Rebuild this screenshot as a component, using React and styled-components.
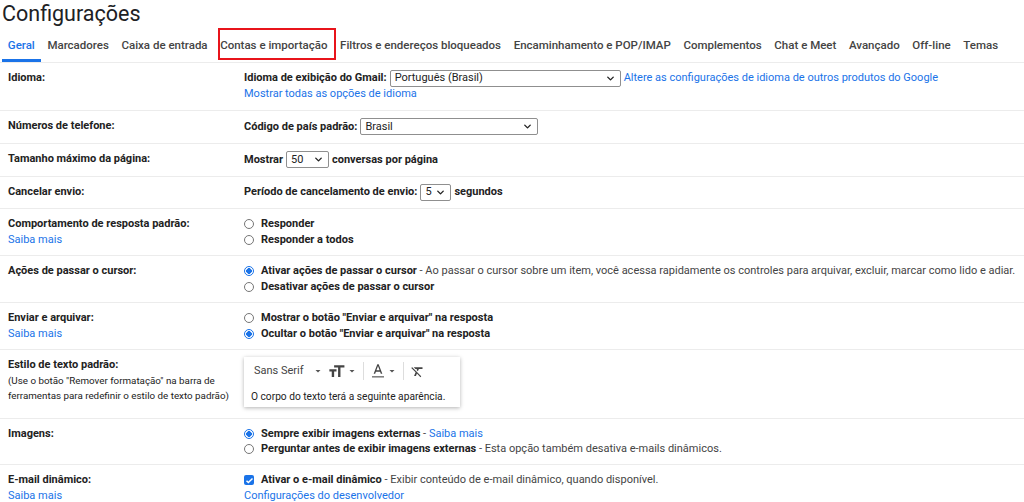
import React from "react";
import styled, { createGlobalStyle, css } from "styled-components";
import { ChevronDown } from "lucide-react";

const GlobalStyle = createGlobalStyle`
  body {
    margin: 0;
    background: #fff;
    font-family: Roboto, "Liberation Sans", Arial, sans-serif;
    color: #222;
  }
`;

const colors = {
  BLUE: "#1a73e8",
  TEXT: "#222",
  GRAY: "#444",
  LINE: "#ececec",
};

const tabs = [
  "Geral",
  "Marcadores",
  "Caixa de entrada",
  "Contas e importação",
  "Filtros e endereços bloqueados",
  "Encaminhamento e POP/IMAP",
  "Complementos",
  "Chat e Meet",
  "Avançado",
  "Off-line",
  "Temas",
];

function Radio({ checked }) {
  return <RadioCircle $checked={checked} />;
}

function Dropdown({ width, children }) {
  return (
    <SelectBox style={{ width }}>
      <span>{children}</span>
      <ChevronDown size={11} strokeWidth={3} color="#222" />
    </SelectBox>
  );
}

function Arrow() {
  return (
    <svg width="12" height="12" viewBox="0 0 24 24">
      <path d="M7 10l5 5 5-5z" fill="#555" />
    </svg>
  );
}

function TextEditor() {
  return (
    <Editor>
      <Toolbar>
        <ToolItem>
          <FontName>Sans Serif</FontName>
          <Arrow />
        </ToolItem>
        <ToolItem>
          <svg width="19" height="19" viewBox="0 0 24 24">
            <path
              d="M9 4v3h5v12h3V7h5V4H9zm-6 8h3v7h3v-7h3V9H3v3z"
              fill="#444"
            />
          </svg>
          <Arrow />
        </ToolItem>
        <ToolSep />
        <ToolItem>
          <svg width="16" height="16" viewBox="0 0 24 24">
            <path
              d="M11 2L5.5 16h2.25l1.12-3h6.25l1.12 3h2.25L13 2h-2zm-1.38 9L12 4.67 14.38 11H9.62z"
              fill="#444"
            />
            <rect x="3" y="20" width="18" height="1.6" fill="#444" />
          </svg>
          <Arrow />
        </ToolItem>
        <ToolSep />
        <ToolItem>
          <svg width="15" height="15" viewBox="0 0 24 24">
            <path
              d="M3.27 5L2 6.27l6.97 6.97L6.5 19h3l1.57-3.66L16.73 21 18 19.73 3.55 5.27 3.27 5zM6 5v.18L8.82 8h2.4l-.72 1.68 2.1 2.1L14.21 8H20V5H6z"
              fill="#444"
            />
          </svg>
        </ToolItem>
      </Toolbar>
      <EditorBody>O corpo do texto terá a seguinte aparência.</EditorBody>
    </Editor>
  );
}

export default function App() {
  return (
    <Page>
      <GlobalStyle />
      <Title>Configurações</Title>
      <TabBar>
        {tabs.map((tab, index) => (
          <Tab key={index} $active={index === 0} $marked={index === 3}>
            {tab}
          </Tab>
        ))}
      </TabBar>

      <Row>
        <Label>Idioma:</Label>
        <Value>
          <Line>
            <Strong>Idioma de exibição do Gmail:</Strong>
            <Dropdown width={231}>Português (Brasil)</Dropdown>
            <Link>Altere as configurações de idioma de outros produtos do Google</Link>
          </Line>
          <Line>
            <Link>Mostrar todas as opções de idioma</Link>
          </Line>
        </Value>
      </Row>

      <Row>
        <Label>Números de telefone:</Label>
        <Value>
          <Line $h={17}>
            <Strong>Código de país padrão:</Strong>
            <Dropdown width={178}>Brasil</Dropdown>
          </Line>
        </Value>
      </Row>

      <Row>
        <Label>Tamanho máximo da página:</Label>
        <Value>
          <Line $h={17}>
            <Strong>Mostrar</Strong>
            <Dropdown width={43}>50</Dropdown>
            <Strong>conversas por página</Strong>
          </Line>
        </Value>
      </Row>

      <Row>
        <Label>Cancelar envio:</Label>
        <Value>
          <Line>
            <Strong>Período de cancelamento de envio:</Strong>
            <Dropdown width={31}>5</Dropdown>
            <Strong>segundos</Strong>
          </Line>
        </Value>
      </Row>

      <Row $pb={7}>
        <Label>
          Comportamento de resposta padrão:
          <Link>Saiba mais</Link>
        </Label>
        <Value>
          <Option>
            <Radio />
            <Strong>Responder</Strong>
          </Option>
          <Option>
            <Radio />
            <Strong>Responder a todos</Strong>
          </Option>
        </Value>
      </Row>

      <Row $pb={7}>
        <Label>Ações de passar o cursor:</Label>
        <Value>
          <Option>
            <Radio checked />
            <Strong>Ativar ações de passar o cursor</Strong>
            <Note>
              &nbsp;- Ao passar o cursor sobre um item, você acessa rapidamente os
              controles para arquivar, excluir, marcar como lido e adiar.
            </Note>
          </Option>
          <Option>
            <Radio />
            <Strong>Desativar ações de passar o cursor</Strong>
          </Option>
        </Value>
      </Row>

      <Row $pb={7}>
        <Label>
          Enviar e arquivar:
          <Link>Saiba mais</Link>
        </Label>
        <Value>
          <Option>
            <Radio />
            <Strong>Mostrar o botão "Enviar e arquivar" na resposta</Strong>
          </Option>
          <Option>
            <Radio checked />
            <Strong>Ocultar o botão "Enviar e arquivar" na resposta</Strong>
          </Option>
        </Value>
      </Row>

      <Row $pb={7}>
        <Label>
          Estilo de texto padrão:
          <Hint>
            (Use o botão "Remover formatação" na barra de ferramentas para
            redefinir o estilo de texto padrão)
          </Hint>
        </Label>
        <Value>
          <TextEditor />
        </Value>
      </Row>

      <Row>
        <Label>Imagens:</Label>
        <Value>
          <Option $h={15}>
            <Radio checked />
            <Strong>Sempre exibir imagens externas</Strong>
            <Note>&nbsp;- </Note>
            <Link>Saiba mais</Link>
          </Option>
          <Option $h={15}>
            <Radio />
            <Strong>Perguntar antes de exibir imagens externas</Strong>
            <Note>&nbsp;- Esta opção também desativa e-mails dinâmicos.</Note>
          </Option>
        </Value>
      </Row>

      <Row $last>
        <Label>
          E-mail dinâmico:
          <Link>Saiba mais</Link>
        </Label>
        <Value>
          <Option>
            <Checkbox>
              <svg width="9" height="9" viewBox="0 0 24 24">
                <path
                  d="M4 12.5l5 5L20 6.5"
                  stroke="#fff"
                  strokeWidth="4"
                  fill="none"
                />
              </svg>
            </Checkbox>
            <Strong>Ativar o e-mail dinâmico</Strong>
            <Note>
              &nbsp;- Exibir conteúdo de e-mail dinâmico, quando disponível.
            </Note>
          </Option>
          <Line>
            <Link>Configurações do desenvolvedor</Link>
          </Line>
        </Value>
      </Row>
    </Page>
  );
}

const Page = styled.div`
  width: 1024px;
  font-size: 11px;
  line-height: 16px;
`;

const Title = styled.div`
  font-size: 21.5px;
  line-height: 28px;
  color: #202124;
  padding: 0 2px;
`;

const TabBar = styled.div`
  display: flex;
  align-items: stretch;
  height: 31px;
  padding: 3px 0 0 1.5px;
  border-bottom: 1px solid ${colors.LINE};
`;

const Tab = styled.div`
  position: relative;
  display: flex;
  align-items: center;
  padding: 0 6.3px;
  font-size: 11.5px;
  font-weight: 500;
  color: ${colors.GRAY};
  white-space: nowrap;
  border-bottom: 3px solid transparent;
  ${(p) =>
    p.$active &&
    css`
      color: ${colors.BLUE};
      border-bottom-color: ${colors.BLUE};
    `}
  ${(p) =>
    p.$marked &&
    css`
      &::after {
        content: "";
        position: absolute;
        left: 4px;
        right: -2px;
        top: -3px;
        bottom: -1px;
        border: 2px solid #e8141b;
      }
    `}
`;

const Row = styled.div`
  display: grid;
  grid-template-columns: 236px 1fr;
  padding: 7px 0 ${(p) => p.$pb ?? 8}px 8px;
  border-bottom: ${(p) => (p.$last ? "none" : `1px solid ${colors.LINE}`)};
`;

const Label = styled.div`
  display: flex;
  flex-direction: column;
  font-weight: 700;
  color: ${colors.TEXT};
`;

const Hint = styled.span`
  font-weight: 400;
  font-size: 9.8px;
  line-height: 15px;
  width: 232px;
`;

const Value = styled.div`
  display: flex;
  flex-direction: column;
`;

const Line = styled.div`
  display: flex;
  align-items: center;
  gap: 3px;
  height: ${(p) => p.$h || 16}px;
  white-space: nowrap;
`;

const Option = styled.div`
  display: flex;
  align-items: center;
  height: ${(p) => p.$h || 16}px;
  white-space: nowrap;
`;

const Strong = styled.span`
  font-weight: 700;
  color: ${colors.TEXT};
`;

const Note = styled.span`
  color: ${colors.GRAY};
  white-space: pre;
`;

const Link = styled.span`
  font-weight: 400;
  color: ${colors.BLUE};
  cursor: pointer;
`;

const SelectBox = styled.div`
  box-sizing: border-box;
  display: flex;
  align-items: center;
  justify-content: space-between;
  height: 17px;
  padding: 0 4px 0 4px;
  border: 1px solid #8f8f8f;
  border-radius: 2px;
  font-weight: 400;
  color: ${colors.TEXT};
`;

const RadioCircle = styled.span`
  box-sizing: border-box;
  width: 10px;
  height: 10px;
  margin: 0 7px 0 0;
  border-radius: 50%;
  flex-shrink: 0;
  border: 1px solid ${(p) => (p.$checked ? colors.BLUE : "#767676")};
  background: ${(p) =>
    p.$checked
      ? `radial-gradient(circle, ${colors.BLUE} 0 2.6px, #fff 3px)`
      : "#fff"};
`;

const Checkbox = styled.span`
  display: flex;
  align-items: center;
  justify-content: center;
  width: 10px;
  height: 10px;
  margin-right: 7px;
  border-radius: 2px;
  background: ${colors.BLUE};
`;

const Editor = styled.div`
  width: 216px;
  height: 50px;
  margin-bottom: 4px;
  box-shadow: 0 1px 4px rgba(0, 0, 0, 0.3);
  display: flex;
  flex-direction: column;
  padding: 0 7px;
  box-sizing: border-box;
`;

const Toolbar = styled.div`
  display: flex;
  align-items: center;
  height: 28px;
  padding-left: 3px;
`;

const ToolItem = styled.div`
  display: flex;
  align-items: center;
  margin-right: 3px;
`;

const FontName = styled.span`
  color: ${colors.GRAY};
  margin-right: 8px;
`;

const ToolSep = styled.div`
  width: 1px;
  height: 18px;
  background: #ddd;
  margin: 0 6px 0 2px;
`;

const EditorBody = styled.div`
  font-size: 10.2px;
  color: ${colors.TEXT};
  padding-top: 4px;
`;
